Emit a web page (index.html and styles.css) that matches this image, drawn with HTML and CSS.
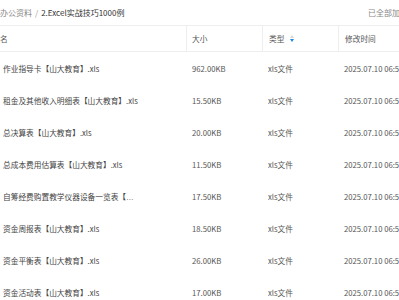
FILE: index.html
```html
<!DOCTYPE html>
<html lang="zh-CN">
<head>
<meta charset="utf-8">
<title>2.Excel实战技巧1000例</title>
<link rel="stylesheet" href="styles.css">
</head>
<body>
<div class="page">
  <div class="crumbs">
    <div class="path"><span class="parent">办公资料</span><span class="sep">/</span><span class="current">2.Excel实战技巧1000例</span></div>
    <div class="loaded">已全部加载，共8个</div>
  </div>
  <div class="list">
    <div class="row head">
      <div class="cell name">名</div>
      <div class="cell size">大小</div>
      <div class="cell type">类型 <span class="sort"><i class="up"></i><i class="down"></i></span></div>
      <div class="cell time">修改时间</div>
    </div>
    <div class="row"><div class="cell name">作业指导卡【山大教育】.xls</div><div class="cell size">962.00KB</div><div class="cell type">xls文件</div><div class="cell time">2025.07.10 06:59</div></div>
    <div class="row"><div class="cell name">租金及其他收入明细表【山大教育】.xls</div><div class="cell size">15.50KB</div><div class="cell type">xls文件</div><div class="cell time">2025.07.10 06:59</div></div>
    <div class="row"><div class="cell name">总决算表【山大教育】.xls</div><div class="cell size">20.00KB</div><div class="cell type">xls文件</div><div class="cell time">2025.07.10 06:59</div></div>
    <div class="row"><div class="cell name">总成本费用估算表【山大教育】.xls</div><div class="cell size">11.50KB</div><div class="cell type">xls文件</div><div class="cell time">2025.07.10 06:59</div></div>
    <div class="row"><div class="cell name"><span class="clip">自筹经费购置教学仪器设备一览表【山大教育】.xls</span></div><div class="cell size">17.50KB</div><div class="cell type">xls文件</div><div class="cell time">2025.07.10 06:59</div></div>
    <div class="row"><div class="cell name">资金周报表【山大教育】.xls</div><div class="cell size">18.50KB</div><div class="cell type">xls文件</div><div class="cell time">2025.07.10 06:59</div></div>
    <div class="row"><div class="cell name">资金平衡表【山大教育】.xls</div><div class="cell size">26.00KB</div><div class="cell type">xls文件</div><div class="cell time">2025.07.10 06:59</div></div>
    <div class="row"><div class="cell name">资金活动表【山大教育】.xls</div><div class="cell size">17.00KB</div><div class="cell type">xls文件</div><div class="cell time">2025.07.10 06:59</div></div>
  </div>
</div>
</body>
</html>
```

FILE: styles.css
```css
html, body {
  margin: 0;
  padding: 0;
  background: #fff;
  overflow: hidden;
}
.page {
  width: 460px;
  font-family: "Noto Sans CJK SC", "Microsoft YaHei", "Noto Sans", sans-serif;
  font-size: 7.7px;
  color: #555;
}
.crumbs {
  height: 25px;
  display: flex;
  align-items: center;
  white-space: nowrap;
}
.path {
  flex: 0 0 368px;
  font-size: 8px;
}
.parent { color: #888; }
.sep { color: #999; margin: 0 3px; }
.current { color: #333; }
.loaded { color: #888; font-size: 8px; }
.list {
  display: flex;
  flex-direction: column;
}
.row {
  display: grid;
  grid-template-columns: 186px 76px 76px 1fr;
  height: 32px;
  align-items: center;
  white-space: nowrap;
}
.row.head {
  height: 25px;
  border-top: 1px solid #eeeeee;
  border-bottom: 1px solid #eeeeee;
  color: #555;
}
.head .cell {
  height: 100%;
  display: flex;
  align-items: center;
}
.head .cell + .cell {
  border-left: 1px solid #eeeeee;
}
.cell { padding-left: 6px; overflow: hidden; }
.cell.name { padding-left: 3px; color: #444; }
.head .cell.name { padding-left: 0; color: #555; }
.head .cell.size { padding-left: 5px; }
.head .cell.time { padding-left: 6px; }
.clip {
  display: inline-block;
  max-width: 131px;
  overflow: hidden;
  text-overflow: ellipsis;
  vertical-align: middle;
  font-family: "Liberation Sans", "Noto Sans CJK SC", sans-serif;
}
.sort {
  display: inline-flex;
  flex-direction: column;
  gap: 1px;
  margin-left: 6px;
}
.sort i {
  display: block;
  width: 0;
  height: 0;
  border-left: 2px solid transparent;
  border-right: 2px solid transparent;
}
.sort .up { border-bottom: 3px solid #d8d8d8; }
.sort .down { border-top: 3px solid #1e88e5; }
```
